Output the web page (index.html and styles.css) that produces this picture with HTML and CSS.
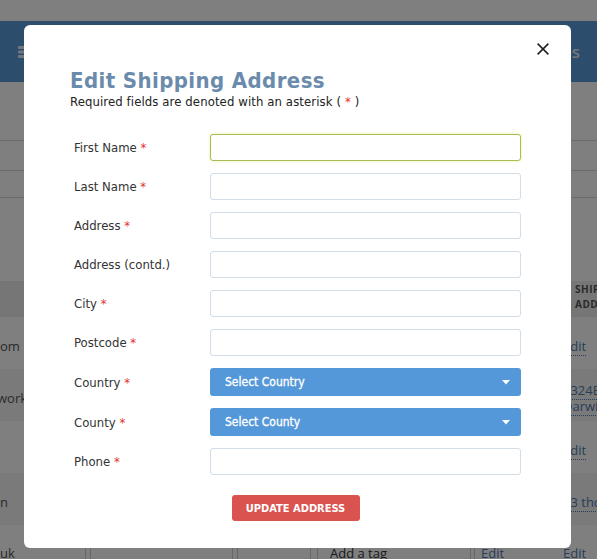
FILE: index.html
```html
<!DOCTYPE html>
<html lang="en">
<head>
<meta charset="utf-8">
<title>Edit Shipping Address</title>
<link rel="stylesheet" href="styles.css">
</head>
<body>
<div class="page">
  <div class="topstrip"></div>
  <header class="appbar">
    <svg class="appbar-icon" width="16" height="12" viewBox="0 0 16 12"><rect x="0" y="0" width="16" height="3" rx="1" fill="#e6eef7"/><rect x="0" y="4.5" width="16" height="3" rx="1" fill="#e6eef7"/><rect x="0" y="9" width="16" height="3" rx="1" fill="#e6eef7"/></svg>
    <span class="appbar-link">Addresses</span>
  </header>
  <div class="band band-a"></div>
  <div class="band band-b"></div>
  <div class="band band-c"></div>
  <div class="band band-d"></div>
  <div class="table">
    <div class="trow thead">
      <div class="cell"></div><div class="cell"></div><div class="cell"></div><div class="cell"></div><div class="cell"></div>
      <div class="cell th">Ship<br>Address</div>
    </div>
    <div class="trow">
      <div class="cell c-first">om</div><div class="cell"></div><div class="cell"></div><div class="cell"></div><div class="cell"></div>
      <div class="cell c-last"><span class="link">Edit</span></div>
    </div>
    <div class="trow stripe">
      <div class="cell c-first"><span class="shift">work.</span></div><div class="cell"></div><div class="cell"></div><div class="cell"></div><div class="cell"></div>
      <div class="cell c-last two"><span class="link">1324B</span><br><span class="link">Darwin</span></div>
    </div>
    <div class="trow">
      <div class="cell c-first"></div><div class="cell"></div><div class="cell"></div><div class="cell"></div><div class="cell"></div>
      <div class="cell c-last"><span class="link">Edit</span></div>
    </div>
    <div class="trow stripe">
      <div class="cell c-first">n</div><div class="cell"></div><div class="cell"></div><div class="cell"></div><div class="cell"></div>
      <div class="cell c-last"><span class="link">23 thompson st</span></div>
    </div>
    <div class="trow">
      <div class="cell c-first">uk</div>
      <div class="cell"><div class="box"></div></div>
      <div class="cell"><div class="box"></div></div>
      <div class="cell"><div class="box tag">Add a tag</div></div>
      <div class="cell"><div class="box edit">Edit</div></div>
      <div class="cell c-last plain">Edit</div>
    </div>
  </div>
</div>

<div class="overlay"></div>

<div class="modal" role="dialog" aria-labelledby="modal-title">
  <button class="modal-close" type="button" aria-label="Close">
    <svg width="12" height="12" viewBox="0 0 12 12"><path d="M0.6 0.6L11.4 11.4M11.4 0.6L0.6 11.4" stroke="#1e1e1e" stroke-width="1.5" fill="none"/></svg>
  </button>
  <h2 class="modal-title" id="modal-title">Edit Shipping Address</h2>
  <p class="modal-note">Required fields are denoted with an asterisk ( <span class="req">*</span> )</p>
  <form class="addr-form">
    <div class="field"><label class="field-label">First Name <span class="req">*</span></label><input class="text-input is-focus" type="text"></div>
    <div class="field"><label class="field-label">Last Name <span class="req">*</span></label><input class="text-input" type="text"></div>
    <div class="field"><label class="field-label">Address <span class="req">*</span></label><input class="text-input" type="text"></div>
    <div class="field"><label class="field-label">Address (contd.)</label><input class="text-input" type="text"></div>
    <div class="field"><label class="field-label">City <span class="req">*</span></label><input class="text-input" type="text"></div>
    <div class="field"><label class="field-label">Postcode <span class="req">*</span></label><input class="text-input" type="text"></div>
    <div class="field"><label class="field-label">Country <span class="req">*</span></label>
      <div class="select-btn"><span>Select Country</span><svg class="caret" width="8" height="5" viewBox="0 0 8 5"><path d="M0 0H8L4 4.5Z" fill="#fff"/></svg></div>
    </div>
    <div class="field"><label class="field-label">County <span class="req">*</span></label>
      <div class="select-btn"><span>Select County</span><svg class="caret" width="8" height="5" viewBox="0 0 8 5"><path d="M0 0H8L4 4.5Z" fill="#fff"/></svg></div>
    </div>
    <div class="field"><label class="field-label">Phone <span class="req">*</span></label><input class="text-input" type="text"></div>
    <div class="actions"><button class="btn-update" type="button">Update Address</button></div>
  </form>
</div>
</body>
</html>
```

FILE: styles.css
```css
* { box-sizing: border-box; }
html, body { margin: 0; height: 100%; }
body {
  font-family: "Open Sans", "DejaVu Sans", sans-serif;
  background: #fff;
  color: #555;
  overflow: hidden;
}

/* ---------- background page ---------- */
.page { width: 597px; }
.topstrip { height: 21px; background: #fff; }
.appbar {
  height: 61px;
  background: #5a9ad8;
  display: flex;
  align-items: center;
  justify-content: space-between;
  padding: 0 17px 0 18px;
}
.appbar-icon { display: block; }
.appbar-link { color: #e8eef5; font-weight: 600; font-size: 17px; }

.band { border-bottom: 1px solid #d6d6d6; }
.band-a { height: 59px; }
.band-b { height: 30px; }
.band-c { height: 27px; }
.band-d { height: 83px; border-bottom: 0; }

.trow {
  display: grid;
  grid-template-columns: 85px 147px 78px 160px 86px 1fr;
  height: 52px;
  font-size: 13px;
}
.trow.thead { height: 36px; background: #ececec; }
.trow.stripe { background: #f5f5f5; }
.cell { padding-top: 20px; line-height: 18px; white-space: nowrap; overflow: hidden; }
.thead .cell { padding-top: 1px; }
.th {
  font-size: 10px;
  font-weight: 700;
  text-transform: uppercase;
  letter-spacing: 0.5px;
  line-height: 15px;
  color: #555;
  padding-left: 19px;
}
.c-first { color: #555; }
.shift { margin-left: -3px; }
.c-last { padding-left: 7px; }
.c-last.two { padding-top: 13px; line-height: 16px; }
.link { color: #4d7cae; border-bottom: 1px dotted #4d7cae; }
.plain { color: #4d7cae; }

.trow:last-child .cell { padding-top: 0; border-left: 1px solid #cfcfcf; }
.trow:last-child .c-first { border-left: 0; padding-top: 19px; }
.trow:last-child .c-last { border-left: 0; padding-top: 19px; }
.box { height: 100%; margin-left: 4px; border-left: 1px solid #cfcfcf; }
.box.tag { margin-left: 6px; padding: 19px 0 0 12px; color: #333; }
.box.edit { margin-left: 3px; padding: 19px 0 0 6px; color: #4d7cae; }

/* ---------- overlay + modal ---------- */
.overlay {
  position: fixed;
  inset: 0;
  background: rgba(0, 0, 0, 0.5);
}
.modal {
  position: fixed;
  left: 24px;
  top: 25px;
  width: 547px;
  height: 523px;
  background: #fff;
  border-radius: 6px;
  padding: 43px 50px 0 46px;
  font-family: "DejaVu Sans Condensed", "DejaVu Sans", sans-serif;
  font-stretch: condensed;
}
.modal-close {
  position: absolute;
  top: 18px;
  right: 22px;
  width: 12px;
  height: 12px;
  padding: 0;
  border: 0;
  background: none;
  line-height: 0;
}
.modal-title {
  margin: 0;
  font-size: 22px;
  line-height: 26px;
  font-weight: 700;
  color: #6a8bab;
  letter-spacing: 0.4px;
}
.modal-note {
  margin: 0;
  font-size: 13px;
  line-height: 16px;
  color: #222;
  letter-spacing: 0.1px;
}
.req { color: #e3342f; }

.addr-form {
  margin-top: 24px;
  display: flex;
  flex-direction: column;
  gap: 12px;
}
.field {
  display: grid;
  grid-template-columns: 140px 311px;
  align-items: center;
}
.field-label {
  padding-left: 4px;
  font-size: 13px;
  color: #333;
}
.text-input {
  height: 27px;
  width: 100%;
  margin: 0;
  border: 1px solid #d2dde8;
  border-radius: 3px;
  background: #fff;
  outline: none;
}
.text-input.is-focus {
  border-color: #a9bb52;
  box-shadow: 0 0 3px rgba(214, 230, 90, 0.6);
}
.select-btn {
  height: 28px;
  background: #5498d9;
  border-radius: 3px;
  color: #fff;
  font-size: 12px;
  font-weight: 400;
  -webkit-text-stroke: 0.3px #fff;
  display: flex;
  align-items: center;
  justify-content: space-between;
  padding: 0 11px 0 15px;
}
.caret { display: block; }

.actions {
  margin-top: 8px;
  display: flex;
  justify-content: center;
}
.btn-update {
  width: 128px;
  height: 26px;
  border: 0;
  border-radius: 3px;
  background: #d9534f;
  color: #fff;
  font-family: "DejaVu Sans Condensed", "DejaVu Sans", sans-serif;
  font-stretch: condensed;
  font-size: 11px;
  font-weight: 700;
  text-transform: uppercase;
  padding: 0;
}
```
